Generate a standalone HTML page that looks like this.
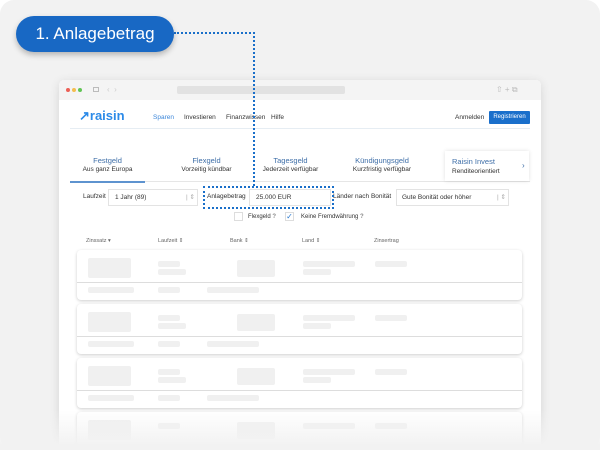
<!DOCTYPE html>
<html style="overflow:hidden;width:600px;height:450px"><head><meta charset="utf-8"><style>
*{margin:0;padding:0;box-sizing:border-box}
body{width:600px;height:450px;background:#fff;font-family:"Liberation Sans",sans-serif;position:relative;overflow:hidden}
.bg{position:absolute;left:0;top:0;width:600px;height:450px;background:#f2f2f2;border-radius:14px}
.a{position:absolute}
.win{left:59px;top:80px;width:482px;height:370px;background:#fff;box-shadow:0 2px 10px rgba(0,0,0,.12);border-radius:5px 5px 0 0;overflow:hidden}
.tb{left:0;top:0;width:482px;height:20px;background:#f4f4f4}
.t{font-size:6.5px;color:#333;white-space:nowrap}
.sk{background:#f0f0f0;border-radius:2px}
.card{width:445px;height:50px;background:#fff;border-radius:4px;box-shadow:0 1px 3px rgba(0,0,0,.2)}
.sel{border:1px solid #e3e3e3;background:#fff;height:17px}
</style></head><body>
<div class="bg"></div>
<div class="a win">
 <div class="a tb">
  <div class="a" style="left:7px;top:8px;width:4px;height:4px;border-radius:50%;background:#ec5f57"></div>
  <div class="a" style="left:13px;top:8px;width:4px;height:4px;border-radius:50%;background:#f4bd4f"></div>
  <div class="a" style="left:19px;top:8px;width:4px;height:4px;border-radius:50%;background:#61c454"></div>
  <div class="a" style="left:34px;top:7px;width:6px;height:5px;border:1px solid #bbb"></div>
  <div class="a t" style="left:48px;top:5px;color:#ccc;font-size:8px">‹ &nbsp;›</div>
  <div class="a" style="left:118px;top:6px;width:168px;height:8px;background:#e2e2e2;border-radius:2px"></div>
  <div class="a t" style="left:437px;top:5px;color:#bbb;font-size:8px">⇧ + ⧉</div>
 </div>
 <div class="a" style="left:20px;top:28px;font-size:13px;font-weight:bold;color:#2b8ae8">↗raisin</div>
 <div class="a t" style="left:94px;top:34px;color:#3b86d9">Sparen</div>
 <div class="a t" style="left:125px;top:34px">Investieren</div>
 <div class="a t" style="left:167px;top:34px">Finanzwissen</div>
 <div class="a t" style="left:212px;top:34px">Hilfe</div>
 <div class="a t" style="left:396px;top:34px">Anmelden</div>
 <div class="a" style="left:430px;top:31px;width:41px;height:13px;background:#1a6fcb;border-radius:1px;color:#fff;font-size:6px;text-align:center;line-height:13px">Registrieren</div>
 <div class="a" style="left:11px;top:48px;width:460px;height:1px;background:#e6edf3"></div>
 <div class="a" style="left:11px;top:101px;width:460px;height:1px;background:#e6e6e6"></div>
 <div class="a" style="left:11px;top:101px;width:75px;height:2px;background:#5e93cf"></div>
 <div class="a t" style="left:11px;top:76px;width:75px;text-align:center;color:#3f6fa8;font-size:7.5px">Festgeld</div>
 <div class="a t" style="left:11px;top:86px;width:75px;text-align:center;font-size:6.5px">Aus ganz Europa</div>
 <div class="a t" style="left:110px;top:76px;width:75px;text-align:center;color:#3f6fa8;font-size:7.5px">Flexgeld</div>
 <div class="a t" style="left:110px;top:86px;width:75px;text-align:center;font-size:6.5px">Vorzeitig kündbar</div>
 <div class="a t" style="left:194px;top:76px;width:75px;text-align:center;color:#3f6fa8;font-size:7.5px">Tagesgeld</div>
 <div class="a t" style="left:194px;top:86px;width:75px;text-align:center;font-size:6.5px">Jederzeit verfügbar</div>
 <div class="a t" style="left:273px;top:76px;width:100px;text-align:center;color:#3f6fa8;font-size:7.5px">Kündigungsgeld</div>
 <div class="a t" style="left:273px;top:86px;width:100px;text-align:center;font-size:6.5px">Kurzfristig verfügbar</div>
 <div class="a" style="left:386px;top:71px;width:84px;height:30px;background:#fff;box-shadow:0 0 4px rgba(0,0,0,.12)"></div>
 <div class="a t" style="left:393px;top:77px;color:#3f6fa8;font-size:7.5px">Raisin Invest</div>
 <div class="a t" style="left:393px;top:88px;font-size:6.5px">Renditeorientiert</div>
 <div class="a t" style="left:463px;top:81px;color:#3f6fa8;font-size:8px">›</div>
 <div class="a t" style="left:24px;top:113px">Laufzeit</div>
 <div class="a sel" style="left:49px;top:109px;width:90px"><span class="a t" style="left:6px;top:4px">1 Jahr (89)</span><span class="a t" style="left:77px;top:3px;color:#aaa">| ⇕</span></div>
 <div class="a t" style="left:148px;top:113px">Anlagebetrag</div>
 <div class="a sel" style="left:190px;top:109px;width:82px"><span class="a t" style="left:6px;top:4px">25.000 EUR</span></div>
 <div class="a t" style="left:274px;top:113px">Länder nach Bonität</div>
 <div class="a sel" style="left:337px;top:109px;width:113px"><span class="a t" style="left:5px;top:4px">Gute Bonität oder höher</span><span class="a t" style="left:100px;top:3px;color:#aaa">| ⇕</span></div>
 <div class="a" style="left:175px;top:132px;width:9px;height:9px;border:1px solid #ddd"></div>
 <div class="a t" style="left:189px;top:134px;font-size:6px">Flexgeld <b style="color:#888">?</b></div>
 <div class="a" style="left:226px;top:132px;width:9px;height:9px;border:1px solid #ddd;color:#2b7ad0;font-size:8px;line-height:8px;text-align:center">✓</div>
 <div class="a t" style="left:242px;top:134px;font-size:6px">Keine Fremdwährung <b style="color:#888">?</b></div>
 <div class="a t" style="left:27px;top:158px;font-size:5.5px;color:#666">Zinssatz ▾</div>
 <div class="a t" style="left:99px;top:158px;font-size:5.5px;color:#666">Laufzeit ⇕</div>
 <div class="a t" style="left:171px;top:158px;font-size:5.5px;color:#666">Bank ⇕</div>
 <div class="a t" style="left:243px;top:158px;font-size:5.5px;color:#666">Land ⇕</div>
 <div class="a t" style="left:315px;top:158px;font-size:5.5px;color:#666">Zinsertrag</div>
</div>
<div class="a card" style="left:77px;top:250px"></div>
<div class="a card" style="left:77px;top:304px"></div>
<div class="a card" style="left:77px;top:358px"></div>
<div class="a card" style="left:77px;top:412px;height:34px"></div>
<div class="a sk" style="left:88px;top:258px;width:43px;height:20px"></div><div class="a sk" style="left:158px;top:261px;width:22px;height:6px"></div><div class="a sk" style="left:158px;top:269px;width:28px;height:6px"></div><div class="a sk" style="left:237px;top:260px;width:38px;height:17px"></div><div class="a sk" style="left:303px;top:261px;width:52px;height:6px"></div><div class="a sk" style="left:303px;top:269px;width:28px;height:6px"></div><div class="a sk" style="left:375px;top:261px;width:32px;height:6px"></div><div class="a" style="left:77px;top:282px;width:445px;height:1px;background:#ddd"></div><div class="a sk" style="left:88px;top:287px;width:46px;height:6px"></div><div class="a sk" style="left:158px;top:287px;width:22px;height:6px"></div><div class="a sk" style="left:207px;top:287px;width:52px;height:6px"></div>
<div class="a sk" style="left:88px;top:312px;width:43px;height:20px"></div><div class="a sk" style="left:158px;top:315px;width:22px;height:6px"></div><div class="a sk" style="left:158px;top:323px;width:28px;height:6px"></div><div class="a sk" style="left:237px;top:314px;width:38px;height:17px"></div><div class="a sk" style="left:303px;top:315px;width:52px;height:6px"></div><div class="a sk" style="left:303px;top:323px;width:28px;height:6px"></div><div class="a sk" style="left:375px;top:315px;width:32px;height:6px"></div><div class="a" style="left:77px;top:336px;width:445px;height:1px;background:#ddd"></div><div class="a sk" style="left:88px;top:341px;width:46px;height:6px"></div><div class="a sk" style="left:158px;top:341px;width:22px;height:6px"></div><div class="a sk" style="left:207px;top:341px;width:52px;height:6px"></div>
<div class="a sk" style="left:88px;top:366px;width:43px;height:20px"></div><div class="a sk" style="left:158px;top:369px;width:22px;height:6px"></div><div class="a sk" style="left:158px;top:377px;width:28px;height:6px"></div><div class="a sk" style="left:237px;top:368px;width:38px;height:17px"></div><div class="a sk" style="left:303px;top:369px;width:52px;height:6px"></div><div class="a sk" style="left:303px;top:377px;width:28px;height:6px"></div><div class="a sk" style="left:375px;top:369px;width:32px;height:6px"></div><div class="a" style="left:77px;top:390px;width:445px;height:1px;background:#ddd"></div><div class="a sk" style="left:88px;top:395px;width:46px;height:6px"></div><div class="a sk" style="left:158px;top:395px;width:22px;height:6px"></div><div class="a sk" style="left:207px;top:395px;width:52px;height:6px"></div>
<div class="a sk" style="left:88px;top:420px;width:43px;height:20px"></div><div class="a sk" style="left:158px;top:423px;width:22px;height:6px"></div><div class="a sk" style="left:237px;top:422px;width:38px;height:17px"></div><div class="a sk" style="left:303px;top:423px;width:52px;height:6px"></div><div class="a sk" style="left:375px;top:423px;width:32px;height:6px"></div>
<div class="a" style="left:0;top:410px;width:600px;height:40px;background:linear-gradient(rgba(242,242,242,0),#f2f2f2 90%)"></div>
<div class="a" style="left:174px;top:32px;width:81px;height:0;border-top:2px dotted #1a6fc9"></div>
<div class="a" style="left:253px;top:32px;width:0;height:154px;border-left:2px dotted #1a6fc9"></div>
<div class="a" style="left:203px;top:186px;width:131px;height:23px;border:2px dotted #1a6fc9"></div>
<div class="a" style="left:16px;top:16px;width:158px;height:36px;background:#1868c4;border-radius:18px;box-shadow:0 3px 6px rgba(0,0,0,.25);color:#fff;font-size:17px;line-height:36px;text-align:center">1. Anlagebetrag</div>
</body></html>
